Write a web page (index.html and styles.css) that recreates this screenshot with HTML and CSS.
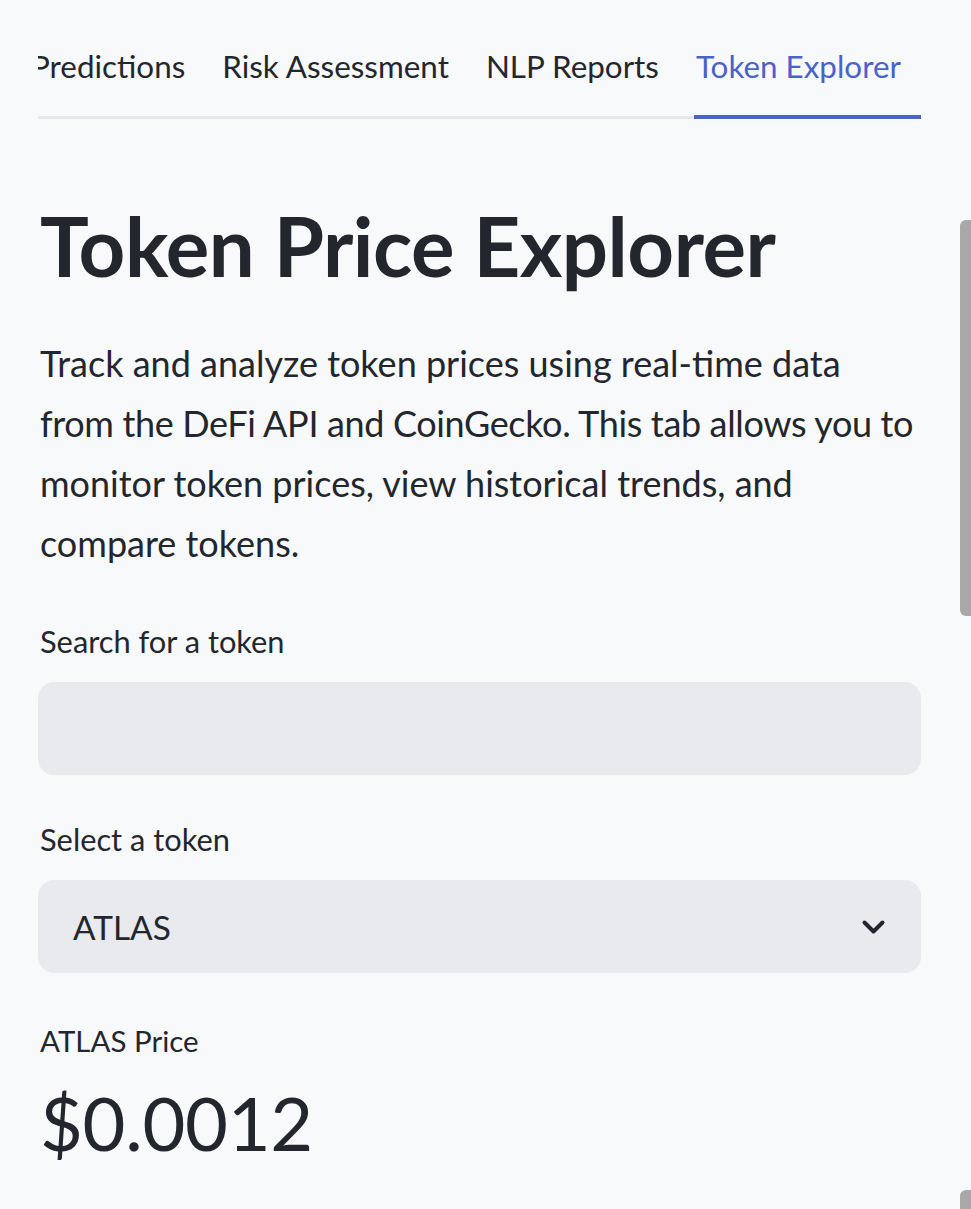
FILE: index.html
```html
<!DOCTYPE html>
<html lang="en">
<head>
<meta charset="utf-8">
<title>Token Price Explorer</title>
<link rel="stylesheet" href="styles.css">
</head>
<body>
<div class="page">
  <nav class="tabs-wrap">
    <div class="tabs">
      <span class="tab">Predictions</span>
      <span class="tab">Risk Assessment</span>
      <span class="tab">NLP Reports</span>
      <span class="tab active">Token Explorer</span>
    </div>
  </nav>

  <main class="content">
    <h1 class="title">Token Price Explorer</h1>
    <p class="intro"><span class="line">Track and analyze token prices using real-time data</span><span class="line tight">from the DeFi API and CoinGecko. This tab allows you to</span><span class="line">monitor token prices, view historical trends, and</span><span class="line">compare tokens.</span></p>

    <div class="field">
      <label class="label" for="search">Search for a token</label>
      <input id="search" class="input" type="text">
    </div>

    <div class="field field-select">
      <span class="label">Select a token</span>
      <div class="select">
        <span class="select-value">ATLAS</span>
        <svg class="chevron" viewBox="0 0 25 16" width="25" height="16" aria-hidden="true"><path d="M3.5 3.5l9 9 9-9" fill="none" stroke="currentColor" stroke-width="4" stroke-linecap="round" stroke-linejoin="round"/></svg>
      </div>
    </div>

    <div class="metric">
      <div class="metric-label">ATLAS Price</div>
      <div class="metric-value">$0.0012</div>
    </div>
  </main>

  <div class="scrollbar top"></div>
  <div class="scrollbar bottom"></div>
</div>
</body>
</html>
```

FILE: styles.css
```css
html, body {
  margin: 0;
  padding: 0;
  background: #f8f9fb;
}
body {
  font-family: Lato, "Noto Sans", sans-serif;
  color: #23262d;
}
.page {
  position: relative;
  min-height: 1209px;
  overflow: hidden;
}
.tabs-wrap {
  margin: 0 50px 0 38px;
  padding-top: 46px;
  overflow: hidden;
  background: linear-gradient(#e6e7ea, #e6e7ea) left bottom / 100% 3px no-repeat;
}
.tabs {
  display: flex;
  gap: 37px;
  margin-left: -7px;
  white-space: nowrap;
}
.tab {
  font-size: 31.4px;
  line-height: 40px;
  padding-bottom: 29px;
  border-bottom: 4px solid transparent;
  color: #23262d;
}
.tab.active {
  color: #4a63c9;
  border-bottom-color: #4a63c9;
  padding-left: 2px;
  padding-right: 20px;
  margin-left: -2px;
}
.content {
  margin: 0 50px 0 38px;
  padding-top: 77px;
}
.title {
  margin: 0 0 0 2px;
  font-size: 81.5px;
  font-weight: 700;
  line-height: 100px;
  letter-spacing: -0.5px;
}
.intro {
  margin: 37px 0 0 2px;
  font-size: 36px;
  line-height: 60px;
  white-space: nowrap;
}
.intro .line {
  display: block;
}
.intro .tight {
  letter-spacing: -0.35px;
}
.field {
  margin-top: 49px;
  display: flex;
  flex-direction: column;
}
.field-select {
  margin-top: 45px;
}
.label {
  margin-left: 2px;
  font-size: 30.8px;
  line-height: 40px;
  margin-bottom: 20px;
}
.input {
  box-sizing: border-box;
  height: 93px;
  border: none;
  border-radius: 16px;
  background: #e8eaed;
  font: inherit;
  outline: none;
}
.select {
  box-sizing: border-box;
  height: 93px;
  border-radius: 16px;
  background: #e8eaed;
  display: flex;
  align-items: center;
  justify-content: space-between;
  padding: 0 35px 0 35px;
}
.select-value {
  font-size: 33.4px;
  line-height: 40px;
}
.chevron {
  color: #23262d;
  display: block;
}
.metric {
  margin-top: 48px;
  margin-left: 2px;
}
.metric-label {
  font-size: 29.5px;
  line-height: 40px;
}
.metric-value {
  margin-top: 12px;
  font-size: 74px;
  line-height: 100px;
  font-weight: 400;
  letter-spacing: -0.3px;
}
.scrollbar {
  position: absolute;
  right: 0;
  width: 11px;
  background: #a8a8a9;
  border-radius: 6px 0 0 6px;
}
.scrollbar.top {
  top: 220px;
  height: 396px;
}
.scrollbar.bottom {
  top: 1190px;
  height: 30px;
}
```
